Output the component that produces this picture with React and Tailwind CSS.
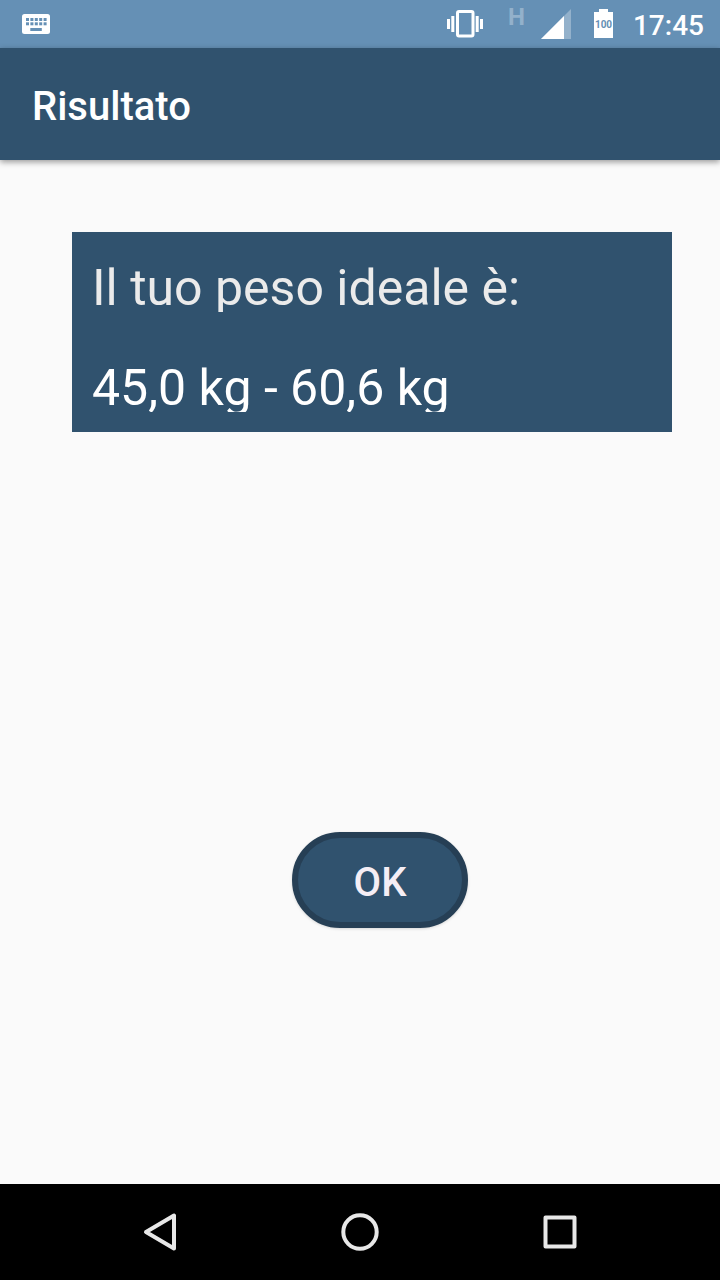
function StatusBar() {
  return (
    <div className="flex h-12 items-center bg-[#6590b5] pl-[22px] pr-4 text-white">
      {/* Tastiera */}
      <svg width="28" height="48" viewBox="0 0 28 48" aria-hidden="true">
        <rect y="14" width="28" height="20" rx="2.5" fill="#fff" />
        <g fill="#6590b5">
          {[4, 8.4, 12.8, 17.2, 21.6].map((x) => (
            <g key={x}>
              <rect x={x} y="18" width="3" height="3" />
              <rect x={x} y="22.3" width="3" height="3" />
            </g>
          ))}
          <rect x="8.3" y="28" width="11.5" height="3" />
        </g>
      </svg>

      {/* Vibrazione */}
      <svg className="ml-auto" width="36" height="48" viewBox="0 0 36 48" aria-hidden="true">
        <rect x="10.5" y="11.5" width="15.5" height="24.5" rx="1.5" fill="none" stroke="#fff" strokeWidth="3" />
        <g fill="#fff">
          <rect x="0" y="19" width="3" height="10" />
          <rect x="4.3" y="16" width="3" height="16" />
          <rect x="28.7" y="16" width="3" height="16" />
          <rect x="33" y="19" width="3" height="10" />
        </g>
      </svg>

      <span className="ml-[25px] self-start text-2xl/[34px] font-bold text-[#93b1cb]">H</span>

      {/* Segnale */}
      <svg className="ml-4" width="30" height="48" viewBox="0 0 30 48" aria-hidden="true">
        <path d="M30 9V39H0Z" fill="#93b1cb" />
        <path d="M23 16V39H0Z" fill="#fff" />
      </svg>

      {/* Batteria */}
      <svg className="ml-[23px]" width="19" height="48" viewBox="0 0 19 48" aria-label="Batteria 100">
        <path d="M5 9H14V12H19V38H0V12H5Z" fill="#fff" />
        <text x="9.5" y="27.5" textAnchor="middle" fontSize="10" fontWeight="700" fill="#6590b5">100</text>
      </svg>

      <span className="ml-5 pt-1 text-[28px]/[44px] font-medium">17:45</span>
    </div>
  )
}

function NavBar() {
  return (
    <nav className="flex h-24 items-center justify-center gap-[152px] bg-black">
      <button type="button" aria-label="Indietro">
        <svg width="48" height="48" viewBox="0 0 48 48" fill="none" stroke="#e8e8e8" strokeWidth="4" strokeLinejoin="round">
          <path d="M38 7.5V40.5L10 24Z" />
        </svg>
      </button>
      <button type="button" aria-label="Home">
        <svg width="48" height="48" viewBox="0 0 48 48" fill="none" stroke="#e8e8e8" strokeWidth="4">
          <circle cx="24" cy="24" r="16.7" />
        </svg>
      </button>
      <button type="button" aria-label="Recenti">
        <svg width="48" height="48" viewBox="0 0 48 48" fill="none" stroke="#e8e8e8" strokeWidth="4" strokeLinejoin="round">
          <rect x="9.5" y="9.5" width="29" height="29" />
        </svg>
      </button>
    </nav>
  )
}

export default function App() {
  return (
    <div className="flex min-h-screen flex-col bg-[#fafafa] font-[Roboto,sans-serif]">
      <StatusBar />

      <header className="flex h-28 items-center bg-[#30526e] px-8 pt-1.5 shadow-[0_2px_6px_rgba(0,0,0,0.4)]">
        <h1 className="text-[40px]/[48px] font-medium text-white">Risultato</h1>
      </header>

      <main className="flex grow flex-col pt-[72px]">
        {/* Righe ad altezza fissa: le discendenti escono dal riquadro */}
        <section className="ml-[72px] mr-12 bg-[#30526e] text-[50px]/[72px]">
          <div className="p-5">
            <p className="h-[60px] overflow-hidden text-[#ebebeb]">Il tuo peso ideale è:</p>
          </div>
          <div className="p-5">
            <p className="h-[60px] overflow-hidden text-white">45,0 kg - 60,6 kg</p>
          </div>
        </section>

        <div className="mt-[400px] flex justify-center pl-10">
          <button
            type="button"
            className="h-24 w-44 rounded-full border-6 border-[#263f55] bg-[#30526e] pt-1.5 text-[40px]/[48px] font-medium text-[#f5eef5] shadow-[0_1px_3px_rgba(0,0,0,0.15)]"
          >
            OK
          </button>
        </div>
      </main>

      <NavBar />
    </div>
  )
}
